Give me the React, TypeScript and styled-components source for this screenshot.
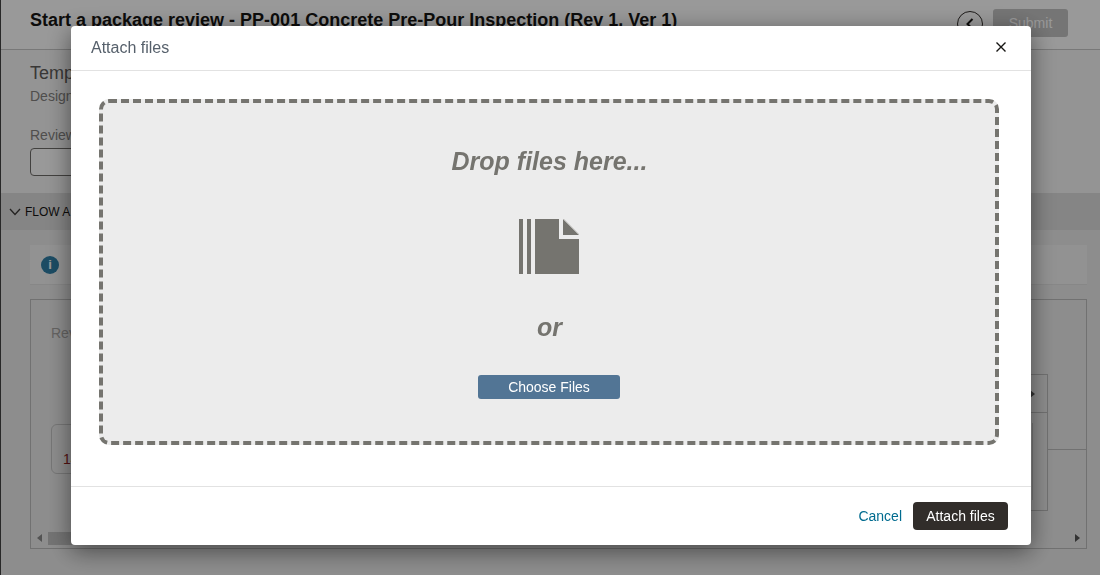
import React from 'react';
import styled, { createGlobalStyle } from 'styled-components';

const GlobalStyle = createGlobalStyle`
	html, body {
		margin: 0;
		padding: 0;
		overflow: hidden;
		background: #fff;
	}
	* {
		box-sizing: border-box;
	}
`;

const Page = styled.div`
	width: 1100px;
	height: 575px;
	overflow: hidden;
	background: #f0f0f0;
	border-left: 1px solid #444;
	font-family: 'Liberation Sans', Arial, sans-serif;
	color: #161513;
`;

const PageHeader = styled.header`
	height: 50px;
	display: flex;
	align-items: flex-start;
	justify-content: space-between;
	padding: 9px 32px 0 29px;
	background: #fff;
	border-bottom: 1px solid #c8c8c8;
`;

const PageTitle = styled.h1`
	margin: 0;
	font-size: 18px;
	line-height: 22px;
	font-weight: 700;
`;

const HeaderActions = styled.div`
	display: flex;
	align-items: center;
	gap: 10px;
`;

const BackButton = styled.div`
	width: 26px;
	height: 26px;
	margin-top: 1px;
	border: 1px solid #312d2a;
	border-radius: 50%;
	display: flex;
	align-items: center;
	justify-content: center;
`;

const SubmitButton = styled.div`
	width: 75px;
	height: 28px;
	border-radius: 3px;
	background: #c4c4c4;
	color: #fff;
	font-size: 14px;
	display: flex;
	align-items: center;
	justify-content: center;
`;

const Summary = styled.section`
	height: 143px;
	padding: 12px 29px 0;
	background: #f7f7f7;
`;

const SummaryTitle = styled.div`
	font-size: 18px;
	line-height: 22px;
	color: #5f5d5b;
`;

const SummarySub = styled.div`
	margin-top: 3px;
	font-size: 14px;
	line-height: 18px;
	color: #858381;
`;

const FieldLabel = styled.div`
	margin-top: 21px;
	font-size: 14px;
	line-height: 18px;
	color: #858381;
`;

const FieldInput = styled.div`
	width: 300px;
	height: 28px;
	margin-top: 4px;
	border: 1px solid #6f6d6a;
	border-radius: 4px;
	background: #fff;
`;

const SectionBand = styled.div`
	height: 37px;
	display: flex;
	align-items: center;
	gap: 4px;
	padding-left: 8px;
	background: #dedede;
	font-size: 12px;
`;

const Content = styled.div`
	height: 345px;
	padding: 15px 13px 0 29px;
	background: #ececec;
`;

const InfoBar = styled.div`
	height: 40px;
	display: flex;
	align-items: center;
	gap: 9px;
	padding-left: 11px;
	background: #f4f4f4;
	border-bottom: 1px solid #e2e2e2;
	font-size: 13px;
	color: #3c3a38;
`;

const InfoDot = styled.div`
	width: 18px;
	height: 18px;
	border-radius: 50%;
	background: #2f7fa6;
	color: #fff;
	font-size: 13px;
	font-weight: 700;
	display: flex;
	align-items: center;
	justify-content: center;
`;

const FlowBox = styled.div`
	height: 250px;
	margin-top: 14px;
	display: flex;
	flex-direction: column;
	border: 1px solid #bdbdbd;
`;

const FlowCanvas = styled.div`
	flex: 1;
	display: flex;
`;

const FlowMain = styled.div`
	flex: 1;
	padding: 24px 0 0 20px;
`;

const FlowLabel = styled.div`
	font-size: 14px;
	line-height: 18px;
	color: #a8a6a4;
`;

const FlowRow = styled.div`
	display: flex;
	justify-content: space-between;
	align-items: flex-start;
	margin-top: 32px;
`;

const StepCard = styled.div`
	width: 220px;
	height: 50px;
	margin-top: 50px;
	padding: 26px 0 0 11px;
	border: 1px solid #c6c6c6;
	border-radius: 6px;
	font-size: 14px;
	line-height: 16px;
	color: #8f1d1d;
`;

const SidePanel = styled.div`
	width: 300px;
	height: 137px;
	display: flex;
	flex-direction: column;
	border: 1px solid #bdbdbd;
`;

const SidePanelHead = styled.div`
	height: 38px;
	display: flex;
	align-items: center;
	justify-content: flex-end;
	padding-right: 12px;
	border-bottom: 1px solid #bdbdbd;
`;

const SidePanelBody = styled.div`
	flex: 1;
	width: 284px;
	margin: 10px 0;
	border-right: 1px solid #c6c6c6;
`;

const FlowSide = styled.div`
	width: 38px;
	height: 150px;
	border-bottom: 1px solid #bdbdbd;
`;

const ScrollTrack = styled.div`
	height: 18px;
	display: flex;
	align-items: center;
	padding: 0 6px;
	margin-bottom: 1px;
`;

const ScrollThumb = styled.div`
	width: 320px;
	height: 13px;
	margin-left: 6px;
	background: #c2c2c2;
`;

const ScrollGap = styled.div`
	flex: 1;
`;

const Arrow = styled.div<{ $dir: 'left' | 'right'; $color: string }>`
	width: 0;
	height: 0;
	border-top: 4px solid transparent;
	border-bottom: 4px solid transparent;
	${(p) =>
		p.$dir === 'left'
			? `border-right: 5px solid ${p.$color};`
			: `border-left: 5px solid ${p.$color};`}
`;

const Overlay = styled.div`
	position: fixed;
	inset: 0;
	padding: 26px 69px 30px 71px;
	background: rgba(0, 0, 0, 0.4);
`;

const Modal = styled.div`
	width: 960px;
	height: 519px;
	display: flex;
	flex-direction: column;
	background: #fff;
	border-radius: 4px;
	box-shadow: 0 6px 24px rgba(0, 0, 0, 0.5);
	font-family: 'Liberation Sans', Arial, sans-serif;
`;

const ModalHeader = styled.div`
	height: 45px;
	flex: none;
	display: flex;
	align-items: center;
	justify-content: space-between;
	padding: 0 24px 0 20px;
	border-bottom: 1px solid #e2e2e2;
`;

const ModalTitle = styled.div`
	font-size: 16px;
	color: #56606b;
`;

const CloseButton = styled.button`
	width: 12px;
	height: 12px;
	padding: 0;
	margin-bottom: 2px;
	border: none;
	background: none;
	display: flex;
`;

const ModalBody = styled.div`
	flex: 1;
	padding: 28px 32px 41px 28px;
`;

const DropZone = styled.div`
	height: 346px;
	display: flex;
	flex-direction: column;
	align-items: center;
	padding-top: 44px;
	background: #ececec;
	border: 4px dashed #75746f;
	border-radius: 10px;
	color: #75746f;
`;

const DropText = styled.div`
	font-size: 25px;
	line-height: 28px;
	font-weight: 700;
	font-style: italic;
	margin-left: 1px;
`;

const DocIcon = styled.svg`
	display: block;
	margin: 44px 0 0;
`;

const OrText = styled(DropText)`
	margin-top: 39px;
`;

const ChooseButton = styled.button`
	width: 142px;
	height: 24px;
	margin-top: 34px;
	padding: 0;
	border: none;
	border-radius: 3px;
	background: #527595;
	color: #fff;
	font-family: inherit;
	font-size: 14px;
`;

const ModalFooter = styled.div`
	height: 59px;
	flex: none;
	display: flex;
	align-items: flex-start;
	justify-content: flex-end;
	gap: 11px;
	padding: 15px 23px 0 0;
	border-top: 1px solid #e2e2e2;
`;

const CancelLink = styled.a`
	font-size: 14px;
	line-height: 28px;
	color: #006b8f;
`;

const AttachButton = styled.button`
	width: 95px;
	height: 28px;
	padding: 0;
	border: none;
	border-radius: 4px;
	background: #312d2a;
	color: #fff;
	font-family: inherit;
	font-size: 14px;
`;

export default function App() {
	return (
		<>
			<GlobalStyle />
			<Page>
				<PageHeader>
					<PageTitle>
						Start a package review - PP-001 Concrete Pre-Pour Inspection (Rev 1, Ver 1)
					</PageTitle>
					<HeaderActions>
						<BackButton>
							<svg width="10" height="12" viewBox="0 0 10 12">
								<path d="M7.5 1 L2.5 6 L7.5 11" fill="none" stroke="#161513" strokeWidth="2" />
							</svg>
						</BackButton>
						<SubmitButton>Submit</SubmitButton>
					</HeaderActions>
				</PageHeader>
				<Summary>
					<SummaryTitle>Template</SummaryTitle>
					<SummarySub>Design</SummarySub>
					<FieldLabel>Review</FieldLabel>
					<FieldInput />
				</Summary>
				<SectionBand>
					<svg width="12" height="8" viewBox="0 0 12 8">
						<path d="M1 1 L6 6.5 L11 1" fill="none" stroke="#3c3a38" strokeWidth="1.3" />
					</svg>
					FLOW A
				</SectionBand>
				<Content>
					<InfoBar>
						<InfoDot>i</InfoDot>
					</InfoBar>
					<FlowBox>
						<FlowCanvas>
							<FlowMain>
								<FlowLabel>Review</FlowLabel>
								<FlowRow>
									<StepCard>14</StepCard>
									<SidePanel>
										<SidePanelHead>
											<Arrow $dir="right" $color="#555" />
										</SidePanelHead>
										<SidePanelBody />
									</SidePanel>
								</FlowRow>
							</FlowMain>
							<FlowSide />
						</FlowCanvas>
						<ScrollTrack>
							<Arrow $dir="left" $color="#8a8a8a" />
							<ScrollThumb />
							<ScrollGap />
							<Arrow $dir="right" $color="#555" />
						</ScrollTrack>
					</FlowBox>
				</Content>
			</Page>
			<Overlay>
				<Modal>
					<ModalHeader>
						<ModalTitle>Attach files</ModalTitle>
						<CloseButton aria-label="Close">
							<svg width="12" height="12" viewBox="0 0 12 12">
								<path d="M1.5 1.5 L10.5 10.5 M10.5 1.5 L1.5 10.5" stroke="#161513" strokeWidth="1.4" />
							</svg>
						</CloseButton>
					</ModalHeader>
					<ModalBody>
						<DropZone>
							<DropText>Drop files here...</DropText>
							<DocIcon width="60" height="55" viewBox="0 0 60 55">
								<rect x="0" y="0" width="4" height="55" fill="#75746f" />
								<rect x="8" y="0" width="4" height="55" fill="#75746f" />
								<path d="M16 0 H40 V20 H60 V55 H16 Z" fill="#75746f" />
								<path d="M44 0 L60 16 H44 Z" fill="#75746f" />
								<path d="M44.5 0 L60 15.5" stroke="#bdbcb8" strokeWidth="1" fill="none" />
							</DocIcon>
							<OrText>or</OrText>
							<ChooseButton>Choose Files</ChooseButton>
						</DropZone>
					</ModalBody>
					<ModalFooter>
						<CancelLink>Cancel</CancelLink>
						<AttachButton>Attach files</AttachButton>
					</ModalFooter>
				</Modal>
			</Overlay>
		</>
	);
}
